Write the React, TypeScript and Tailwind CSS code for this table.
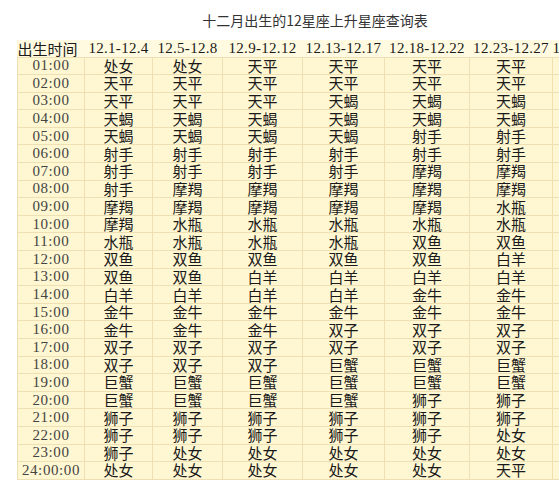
const headers = [
  '出生时间',
  '12.1-12.4',
  '12.5-12.8',
  '12.9-12.12',
  '12.13-12.17',
  '12.18-12.22',
  '12.23-12.27',
  '12.28-12.31',
];

const widths = ['w-[67px]', 'w-[68px]', 'w-[70px]', 'w-[80px]', 'w-[82px]', 'w-[85px]', 'w-[83px]', 'w-[61px]'];

const rows: [string, string[]][] = [
  ['01:00', ['处女', '处女', '天平', '天平', '天平', '天平', '天平']],
  ['02:00', ['天平', '天平', '天平', '天平', '天平', '天平', '天平']],
  ['03:00', ['天平', '天平', '天平', '天蝎', '天蝎', '天蝎', '天蝎']],
  ['04:00', ['天蝎', '天蝎', '天蝎', '天蝎', '天蝎', '天蝎', '天蝎']],
  ['05:00', ['天蝎', '天蝎', '天蝎', '天蝎', '射手', '射手', '射手']],
  ['06:00', ['射手', '射手', '射手', '射手', '射手', '射手', '射手']],
  ['07:00', ['射手', '射手', '射手', '射手', '摩羯', '摩羯', '摩羯']],
  ['08:00', ['射手', '摩羯', '摩羯', '摩羯', '摩羯', '摩羯', '摩羯']],
  ['09:00', ['摩羯', '摩羯', '摩羯', '摩羯', '摩羯', '水瓶', '水瓶']],
  ['10:00', ['摩羯', '水瓶', '水瓶', '水瓶', '水瓶', '水瓶', '水瓶']],
  ['11:00', ['水瓶', '水瓶', '水瓶', '水瓶', '双鱼', '双鱼', '双鱼']],
  ['12:00', ['双鱼', '双鱼', '双鱼', '双鱼', '双鱼', '白羊', '白羊']],
  ['13:00', ['双鱼', '双鱼', '白羊', '白羊', '白羊', '白羊', '白羊']],
  ['14:00', ['白羊', '白羊', '白羊', '白羊', '金牛', '金牛', '金牛']],
  ['15:00', ['金牛', '金牛', '金牛', '金牛', '金牛', '金牛', '金牛']],
  ['16:00', ['金牛', '金牛', '金牛', '双子', '双子', '双子', '双子']],
  ['17:00', ['双子', '双子', '双子', '双子', '双子', '双子', '双子']],
  ['18:00', ['双子', '双子', '双子', '巨蟹', '巨蟹', '巨蟹', '巨蟹']],
  ['19:00', ['巨蟹', '巨蟹', '巨蟹', '巨蟹', '巨蟹', '巨蟹', '巨蟹']],
  ['20:00', ['巨蟹', '巨蟹', '巨蟹', '巨蟹', '狮子', '狮子', '狮子']],
  ['21:00', ['狮子', '狮子', '狮子', '狮子', '狮子', '狮子', '狮子']],
  ['22:00', ['狮子', '狮子', '狮子', '狮子', '狮子', '处女', '处女']],
  ['23:00', ['狮子', '处女', '处女', '处女', '处女', '处女', '处女']],
  ['24:00:00', ['处女', '处女', '处女', '处女', '处女', '天平', '天平']],
];

export default function App() {
  return (
    <div className="w-[559px] h-[500px] overflow-hidden bg-white">
      <div className="ml-[17px] w-[596px]">
        <div className="h-[40px] flex items-center justify-center pt-[1px] text-[14px] text-[#333] font-['Noto_Sans_CJK_SC',sans-serif]">
          十二月出生的12星座上升星座查询表
        </div>
        <table className="border-collapse table-fixed w-[596px] bg-[#fff7d2]">
          <thead>
            <tr className="h-[17px] bg-[#fffae0]">
              {headers.map((h, i) => (
                <th
                  key={h}
                  className={`${widths[i]} p-0 font-normal whitespace-nowrap leading-none text-[#1a1a1a] ${
                    i === 0
                      ? "text-left text-[15px] font-['Noto_Sans_CJK_SC',sans-serif]"
                      : "text-center text-[15px] tracking-[0.3px] font-['Liberation_Serif','Noto_Sans_CJK_SC',serif]"
                  }`}
                >
                  {h}
                </th>
              ))}
            </tr>
          </thead>
          <tbody>
            {rows.map(([time, signs]) => (
              <tr key={time} className="h-[17.6px]">
                <td className="p-0 border border-[#eedfb4] text-center leading-none whitespace-nowrap text-[15px] tracking-[0.6px] text-[#444] font-['Liberation_Serif',serif]">
                  {time}
                </td>
                {signs.map((s, j) => (
                  <td
                    key={j}
                    className="p-0 pb-[1px] border border-[#eedfb4] text-center leading-none whitespace-nowrap text-[15px] text-[#1a1a1a] font-['Noto_Sans_CJK_SC',sans-serif]"
                  >
                    {s}
                  </td>
                ))}
              </tr>
            ))}
          </tbody>
        </table>
      </div>
    </div>
  );
}
